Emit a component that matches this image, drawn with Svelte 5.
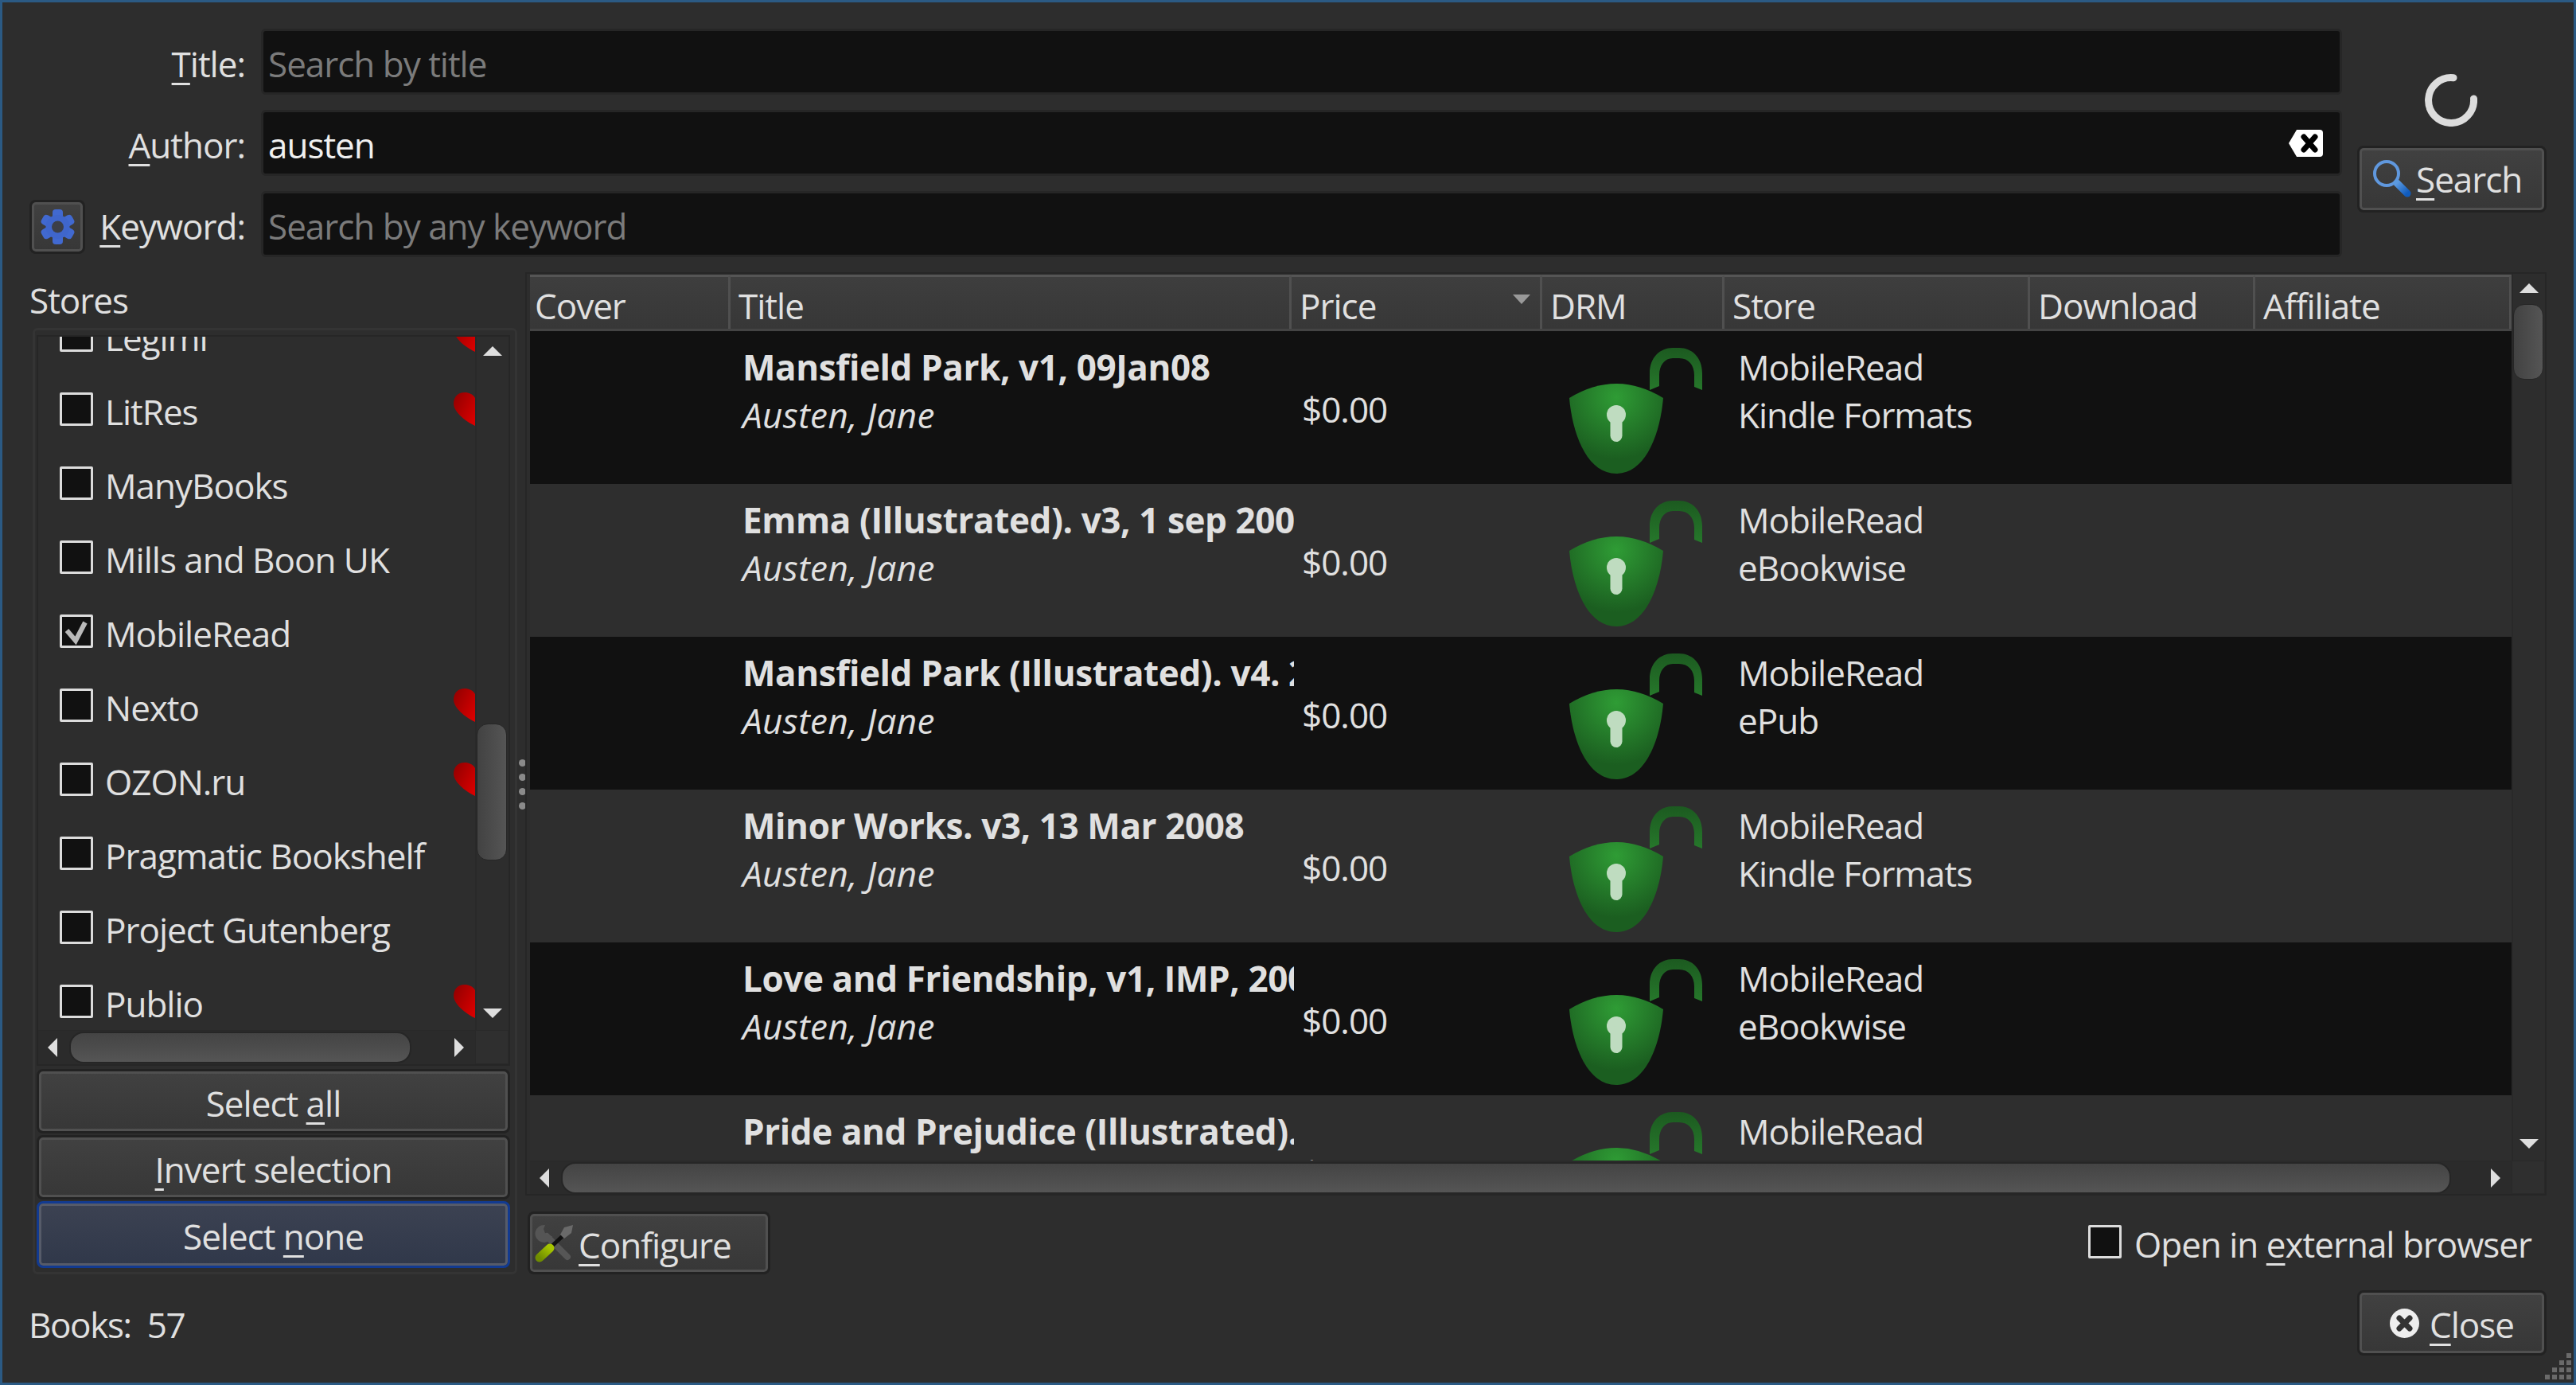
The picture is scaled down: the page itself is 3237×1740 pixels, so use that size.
<script>
  const stores = [
    { name: 'Legimi', heart: true },
    { name: 'LitRes', heart: true },
    { name: 'ManyBooks' },
    { name: 'Mills and Boon UK' },
    { name: 'MobileRead', checked: true },
    { name: 'Nexto', heart: true },
    { name: 'OZON.ru', heart: true },
    { name: 'Pragmatic Bookshelf' },
    { name: 'Project Gutenberg' },
    { name: 'Publio', heart: true }
  ]

  const columns = ['Cover', 'Title', 'Price', 'DRM', 'Store', 'Download', 'Affiliate']

  const books = [
    { title: 'Mansfield Park, v1, 09Jan08', format: 'Kindle Formats' },
    { title: 'Emma (Illustrated). v3, 1 sep 2007', format: 'eBookwise' },
    { title: 'Mansfield Park (Illustrated). v4. 2007', format: 'ePub' },
    { title: 'Minor Works. v3, 13 Mar 2008', format: 'Kindle Formats' },
    { title: 'Love and Friendship, v1, IMP, 2007', format: 'eBookwise' },
    { title: 'Pride and Prejudice (Illustrated).', format: 'ePub' }
  ]
</script>

<div class="window">
  <section class="search">
    <div class="form">
      <div class="label"><span><u>T</u>itle:</span></div>
      <input class="field" placeholder="Search by title" />

      <div class="label"><span><u>A</u>uthor:</span></div>
      <div class="clearable">
        <input class="field" value="austen" />
        <svg class="clear" width="43" height="34" viewBox="0 0 43 34">
          <path d="M10 0H39a4 4 0 0 1 4 4V30a4 4 0 0 1-4 4H10L0 17Z" fill="#fff" />
          <path d="M19 9L33 25M33 9L19 25" stroke="#000" stroke-width="7" stroke-linecap="round" />
        </svg>
      </div>

      <div class="label spread">
        <button class="btn gear">
          <svg width="43" height="44" viewBox="0 0 43 44">
            {#each [0, 60, 120, 180, 240, 300] as a}
              <rect x="15" y="0" width="13" height="14" rx="4" fill="#4169d0" transform="rotate({a} 21.5 22)" />
            {/each}
            <circle cx="21.5" cy="22" r="15" fill="#3f66cc" />
            <circle cx="21.5" cy="22" r="7.5" fill="#3c3f48" />
          </svg>
        </button>
        <span><u>K</u>eyword:</span>
      </div>
      <input class="field" placeholder="Search by any keyword" />
    </div>

    <div class="actions">
      <svg class="spinner" width="66" height="66" viewBox="0 0 66 66">
        <path d="M36 4.7A28.5 28.5 0 1 0 61.5 31" fill="none" stroke="#dcdcdc" stroke-width="9" stroke-linecap="round" />
      </svg>
      <button class="btn search-btn">
        <svg width="49" height="48" viewBox="0 0 49 48">
          <defs>
            <linearGradient id="handle" x1="0" y1="0" x2="1" y2="1">
              <stop offset="0" stop-color="#5c9ae0" />
              <stop offset="1" stop-color="#0f5bbd" />
            </linearGradient>
          </defs>
          <circle cx="18" cy="17" r="15" fill="none" stroke="#6098de" stroke-width="4" />
          <path d="M31 29L44 42" stroke="url(#handle)" stroke-width="9" stroke-linecap="round" />
        </svg>
        <span><u>S</u>earch</span>
      </button>
    </div>
  </section>

  <section class="main">
    <div class="left">
      <div class="stores-title">Stores</div>
      <div class="group">
        <div class="list">
          <div class="list-view">
            <div class="list-inner">
              {#each stores as s}
                <div class="store">
                  <span class="box">
                    {#if s.checked}
                      <svg width="36" height="36" viewBox="0 0 36 36">
                        <path d="M6 17L17 30L29 7" fill="none" stroke="#b9b9b9" stroke-width="6" />
                      </svg>
                    {/if}
                  </span>
                  <span class="store-name">{s.name}</span>
                  {#if s.heart}
                    <svg class="heart" width="27" height="42" viewBox="0 0 27 42">
                      <defs>
                        <linearGradient id="red{s.name}" x1="0" y1="0" x2="1" y2="0.8">
                          <stop offset="0" stop-color="#8f0000" />
                          <stop offset="1" stop-color="#d80000" />
                        </linearGradient>
                      </defs>
                      <path d="M27 7C24 2 19 0 14 0C5 0 0 6 0 14C0 24 14 36 27 42Z" fill="url(#red{s.name})" />
                    </svg>
                  {/if}
                </div>
              {/each}
            </div>
          </div>
          <div class="vbar small">
            <i class="arrow up"></i>
            <div class="vtrack"><div class="vthumb list-thumb"></div></div>
            <i class="arrow down"></i>
          </div>
          <div class="hbar">
            <i class="arrow left-a"></i>
            <div class="hthumb list-hthumb"></div>
            <i class="arrow right-a"></i>
          </div>
          <div class="corner"></div>
        </div>
        <div class="select-btns">
          <button class="btn select"><span>Select <u>a</u>ll</span></button>
          <button class="btn select"><span><u>I</u>nvert selection</span></button>
          <button class="btn select focus"><span>Select <u>n</u>one</span></button>
        </div>
      </div>
    </div>

    <div class="splitter">
      <i></i><i></i><i></i><i></i>
    </div>

    <div class="right">
      <div class="results">
        <div class="table">
          <div class="thead">
            {#each columns as c}
              <div class="th">
                {c}
                {#if c == 'Price'}<i class="sort"></i>{/if}
              </div>
            {/each}
          </div>
          {#each books as b, i}
            <div class="row" class:dark={i % 2 == 0}>
              <div></div>
              <div class="title-cell">
                <div class="book-title">{b.title}</div>
                <div class="author">Austen, Jane</div>
              </div>
              <div class="price">$0.00</div>
              <div class="drm">
                <svg width="168" height="158" viewBox="0 0 168 158">
                  <defs>
                    <radialGradient id="body{i}" gradientUnits="userSpaceOnUse" cx="59" cy="62" r="78">
                      <stop offset="0" stop-color="#2f9c35" />
                      <stop offset="1" stop-color="#1b5e20" />
                    </radialGradient>
                    <linearGradient id="shackle{i}" x1="0" y1="0" x2="0" y2="1">
                      <stop offset="0" stop-color="#1c5a20" />
                      <stop offset="1" stop-color="#26782b" />
                    </linearGradient>
                  </defs>
                  <path d="M101 53V32C101 12 114 0 130 0H138C154 0 167 12 167 32V53L157 49V34C157 22 150 13 138 13H130C120 13 113 22 113 34V48Z" fill="url(#shackle{i})" />
                  <path d="M0 63Q59 27 118 63C114 110 95 158 59 158C23 158 4 110 0 63Z" fill="url(#body{i})" />
                  <circle cx="59" cy="84" r="12" fill="#bfdcc0" />
                  <rect x="51.5" y="84" width="15" height="34" rx="7.5" fill="#bfdcc0" />
                </svg>
              </div>
              <div class="store-cell">
                <div>MobileRead</div>
                <div>{b.format}</div>
              </div>
              <div></div>
              <div></div>
            </div>
          {/each}
        </div>
        <div class="vbar">
          <i class="arrow up"></i>
          <div class="vtrack"><div class="vthumb table-thumb"></div></div>
          <i class="arrow down"></i>
        </div>
        <div class="hbar">
          <i class="arrow left-a"></i>
          <div class="hthumb table-hthumb"></div>
          <i class="arrow right-a"></i>
        </div>
        <div class="corner"></div>
      </div>

      <div class="tools">
        <button class="btn configure">
          <svg width="48" height="48" viewBox="0 0 48 48">
            <defs>
              <linearGradient id="olive" x1="0" y1="1" x2="1" y2="0">
                <stop offset="0" stop-color="#6f8c00" />
                <stop offset="1" stop-color="#a5c400" />
              </linearGradient>
            </defs>
            <path d="M15 15L41 41" stroke="#565656" stroke-width="8" stroke-linecap="round" />
            <path d="M13 1A11 11 0 1 0 22 15L14 14L11 6Z" fill="#555" />
            <path d="M22 27L37 13" stroke="#111" stroke-width="5" />
            <path d="M32 13L37 4L48 1L46 11L37 18Z" fill="#6a6a6a" />
            <path d="M6 42L19 30" stroke="url(#olive)" stroke-width="11" stroke-linecap="round" />
          </svg>
          <span><u>C</u>onfigure</span>
        </button>
        <div class="external">
          <span class="box"></span>
          <span>Open in <u>e</u>xternal browser</span>
        </div>
      </div>
    </div>
  </section>

  <footer class="footer">
    <div class="count">Books:&nbsp; 57</div>
    <button class="btn close">
      <svg width="37" height="37" viewBox="0 0 37 37">
        <circle cx="18.5" cy="18.5" r="18.5" fill="#eee" />
        <path d="M12 12L25 25M25 12L12 25" stroke="#333" stroke-width="7" stroke-linecap="round" />
      </svg>
      <span><u>C</u>lose</span>
    </button>
  </footer>

  <svg class="grip" width="34" height="34" viewBox="0 0 34 34">
    {#each [[27, 0], [18, 9], [27, 9], [9, 18], [18, 18], [27, 18], [0, 27], [9, 27], [18, 27], [27, 27]] as d}
      <rect x={d[0]} y={d[1]} width="6" height="6" fill="#6a6a6a" />
    {/each}
  </svg>
</div>

<style>
  :global(body) {
    margin: 0;
    background: #2d2d2d;
  }
  .window {
    position: relative;
    box-sizing: border-box;
    width: 3237px;
    height: 1740px;
    overflow: hidden;
    border: 3px solid #2b5a84;
    padding: 33px 34px 0 34px;
    background: #2d2d2d;
    color: #e0e0e0;
    font-family: "Open Sans", "Noto Sans", sans-serif;
    font-size: 44px;
    letter-spacing: -1px;
  }
  u {
    text-decoration-thickness: 3px;
    text-underline-offset: 7px;
    text-decoration-skip-ink: none;
  }
  i {
    display: block;
  }
  .search {
    display: flex;
    gap: 19px;
  }
  .form {
    flex: 1;
    display: grid;
    grid-template-columns: 291px 1fr;
    grid-auto-rows: 83px;
    row-gap: 19px;
  }
  .label {
    display: flex;
    align-items: center;
    justify-content: flex-end;
    padding-right: 20px;
  }
  .label span {
    padding-top: 4px;
  }
  .spread {
    justify-content: space-between;
  }
  .field {
    box-sizing: border-box;
    width: 100%;
    height: 83px;
    border: 3px solid #262626;
    border-radius: 6px;
    padding: 4px 6px 0;
    background: #111;
    color: #f0f0f0;
    font: inherit;
    letter-spacing: inherit;
    outline: none;
  }
  .field::placeholder {
    color: #7b7b7b;
    opacity: 1;
  }
  .clearable {
    position: relative;
  }
  .clear {
    position: absolute;
    right: 24px;
    top: 25px;
  }
  .btn {
    box-sizing: border-box;
    border: 3px solid #222;
    border-radius: 8px;
    box-shadow: inset 0 0 0 3px #505050;
    background: linear-gradient(#414141, #373737);
    color: inherit;
    font: inherit;
    letter-spacing: inherit;
    padding: 0;
    display: flex;
    align-items: center;
    justify-content: center;
  }
  .gear {
    width: 70px;
    height: 68px;
    margin-top: 6px;
  }
  .actions {
    width: 238px;
    display: flex;
    flex-direction: column;
    align-items: center;
  }
  .spinner {
    margin-top: 57px;
    margin-bottom: 24px;
    margin-right: 3px;
  }
  .search-btn {
    width: 238px;
    height: 84px;
    gap: 6px;
    justify-content: flex-start;
    padding-left: 16px;
  }
  .main {
    display: grid;
    grid-template-columns: 613px 10px 1fr;
    margin-top: 19px;
    height: 1259px;
  }
  .stores-title {
    height: 70px;
    line-height: 70px;
  }
  .group {
    box-sizing: border-box;
    height: 1189px;
    margin-left: 4px;
    border: 3px solid #343434;
    border-radius: 6px;
    padding: 6px 6px 5px 2px;
  }
  .list {
    box-sizing: border-box;
    height: 918px;
    border: 2px solid #262626;
    display: grid;
    grid-template-columns: 549px 1fr;
    grid-template-rows: 1fr 43px;
  }
  .list-view {
    overflow: hidden;
    min-height: 0;
  }
  .list-inner {
    margin-top: -49px;
  }
  .store {
    display: flex;
    align-items: center;
    height: 93px;
    padding-left: 27px;
  }
  .box {
    box-sizing: border-box;
    flex: none;
    display: block;
    width: 42px;
    height: 42px;
    border: 3px solid #dcdcdc;
    border-radius: 2px;
    background: #111;
  }
  .box svg {
    display: block;
  }
  .store-name {
    margin-left: 15px;
    padding-top: 6px;
  }
  .heart {
    margin-left: auto;
    flex: none;
  }
  .vbar {
    background: #2d2d2d;
    border-left: 2px solid #292929;
    display: flex;
    flex-direction: column;
    align-items: center;
    padding: 12px 0 15px;
  }
  .vtrack {
    flex: 1;
    align-self: stretch;
  }
  .vthumb {
    box-sizing: border-box;
    width: 38px;
    border: 1px solid #262626;
    border-radius: 14px;
    background: linear-gradient(90deg, #424242, #555);
  }
  .list-thumb {
    height: 172px;
    margin-top: 462px;
  }
  .table-thumb {
    height: 95px;
    margin-top: 14px;
  }
  .arrow {
    width: 0;
    height: 0;
    flex: none;
    border-style: solid;
    border-color: transparent;
  }
  .up {
    border-width: 0 12px 12px;
    border-bottom-color: #dedede;
  }
  .down {
    border-width: 12px 12px 0;
    border-top-color: #dedede;
  }
  .left-a {
    border-width: 12px 12px 12px 0;
    border-right-color: #dedede;
  }
  .right-a {
    border-width: 12px 0 12px 12px;
    border-left-color: #dedede;
  }
  .hbar {
    display: flex;
    align-items: center;
    background: #2b2b2b;
    border-top: 1px solid #292929;
    padding: 0 14px 0 12px;
  }
  .hthumb {
    box-sizing: border-box;
    height: 40px;
    border: 2px solid #262626;
    border-radius: 18px;
    background: linear-gradient(#444, #555);
  }
  .list-hthumb {
    width: 430px;
    margin: 0 auto 0 15px;
  }
  .table-hthumb {
    width: 2375px;
    margin: 0 auto 0 15px;
  }
  .corner {
    border: 1px solid #292929;
    background: #2f2f2f;
  }
  .select-btns {
    display: flex;
    flex-direction: column;
    gap: 2px;
    margin-top: 4px;
  }
  .select {
    width: 595px;
    height: 81px;
    padding-top: 4px;
  }
  .focus {
    height: 84px;
    border-color: #123a90;
    box-shadow: inset 0 0 0 3px #565b69;
    background: linear-gradient(#3c4252, #30384a);
  }
  .splitter {
    padding-top: 612px;
  }
  .splitter i {
    width: 9px;
    height: 9px;
    margin: 0 0 9px 2px;
    border-radius: 50%;
    background: #8a8a8a;
  }
  .right {
    min-width: 0;
  }
  .results {
    box-sizing: border-box;
    height: 1160px;
    border: 2px solid #262626;
    padding-left: 4px;
    display: grid;
    grid-template-columns: 2490px 1fr;
    grid-template-rows: 1fr 42px;
  }
  .table {
    min-height: 0;
    overflow: hidden;
    padding-top: 1px;
  }
  .thead, .row {
    display: grid;
    grid-template-columns: 252px 705px 315px 229px 384px 283px 322px;
  }
  .thead {
    height: 71px;
    box-sizing: border-box;
    border-bottom: 3px solid #444;
  }
  .th {
    position: relative;
    box-sizing: border-box;
    height: 68px;
    border-top: 3px solid #555;
    border-right: 3px solid #505050;
    padding-left: 10px;
    line-height: 72px;
    background: linear-gradient(#3e3e3e, #373737);
  }
  .th:first-child {
    padding-left: 6px;
  }
  .sort {
    position: absolute;
    right: 12px;
    top: 22px;
    border-style: solid;
    border-color: #999 transparent transparent;
    border-width: 12px 11px 0;
  }
  .row {
    height: 192px;
    background: #2e2e2e;
  }
  .dark {
    background: #111;
  }
  .title-cell {
    overflow: hidden;
    white-space: nowrap;
    padding: 15px 0 0 15px;
    line-height: 60px;
    width: 708px;
    box-sizing: border-box;
  }
  .book-title {
    font-weight: 700;
    letter-spacing: -0.4px;
  }
  .author {
    font-style: italic;
    letter-spacing: 0.4px;
  }
  .price {
    padding: 68px 0 0 13px;
    line-height: 60px;
  }
  .drm {
    padding: 21px 0 0 34px;
  }
  .drm svg {
    display: block;
  }
  .store-cell {
    padding: 15px 0 0 17px;
    line-height: 60px;
  }
  .tools {
    display: flex;
    justify-content: space-between;
    align-items: flex-start;
    margin-top: 20px;
    padding: 0 19px 0 3px;
  }
  .configure {
    width: 305px;
    height: 79px;
    gap: 7px;
    justify-content: flex-start;
    padding-left: 6px;
  }
  .configure span {
    padding-top: 4px;
  }
  .external {
    display: flex;
    align-items: center;
    gap: 16px;
    height: 60px;
    margin-top: 8px;
  }
  .external span:last-child {
    padding-top: 6px;
  }
  .footer {
    display: flex;
    justify-content: space-between;
    align-items: center;
    margin-top: 20px;
  }
  .count {
    padding-top: 4px;
    margin-left: -1px;
    letter-spacing: -1.4px;
  }
  .close {
    width: 238px;
    height: 82px;
    gap: 13px;
  }
  .close span {
    padding-top: 4px;
  }
  .grip {
    position: absolute;
    right: 2px;
    bottom: 3px;
  }
</style>
